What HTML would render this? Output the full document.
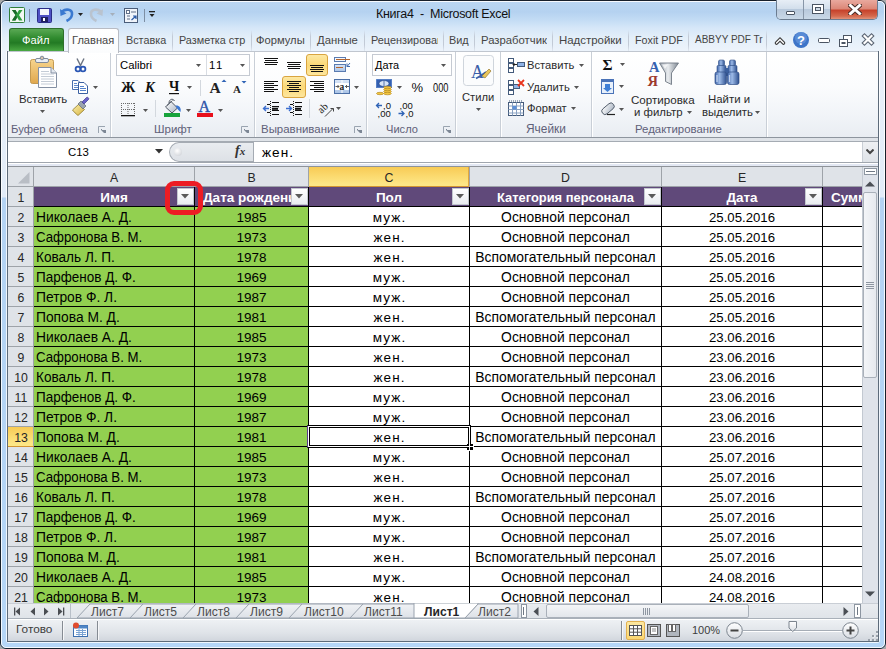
<!DOCTYPE html><html><head><meta charset="utf-8"><style>
html,body{margin:0;padding:0;}
body{width:886px;height:649px;overflow:hidden;position:relative;font-family:"Liberation Sans", sans-serif;background:#a8a8a8;}
div{box-sizing:border-box;}
</style></head><body>
<div style="position:absolute;left:0;top:0;width:886px;height:649px;border-radius:6px;overflow:hidden;background:linear-gradient(#f2f7fc 0px,#bad6f2 2px,#b5d2f0 12px,#c3dcf4 20px,#d6e7f8 28px,#e4eff9 38px,#ecf3fb 50px,#e6eff9 100px,#e2ecf8 197px,#b4d3f3 198px,#b5d6f7 649px);"></div>
<div style="position:absolute;left:0;top:0;width:886px;height:649px;border-radius:6px;border:1px solid #17202b;"></div>
<div style="position:absolute;left:1px;top:1px;width:884px;height:647px;border-radius:5px;border:1px solid rgba(255,255,255,0.85);"></div>
<div style="position:absolute;left:6px;top:51px;width:874px;height:592px;border-radius:0 0 3px 3px;border:1px solid rgba(255,255,255,0.8);border-top:none;"></div>
<div style="position:absolute;left:376px;top:8px;font-size:12.5px;line-height:1;color:#111;white-space:nowrap;z-index:6;letter-spacing:-0.3px;">Книга4 &nbsp;-&nbsp; Microsoft Excel</div>
<div style="position:absolute;left:776px;top:0px;width:102px;height:20px;border:1px solid #6b7c90;border-top:none;border-radius:0 0 5px 5px;overflow:hidden;"><div style="position:absolute;left:0;top:0;width:27px;height:19px;background:linear-gradient(#e7eef6,#d3dfec 45%,#b8c9dc 50%,#c9d8e7);border-right:1px solid #8796a8;"></div><div style="position:absolute;left:27px;top:0;width:27px;height:19px;background:linear-gradient(#e7eef6,#d3dfec 45%,#b8c9dc 50%,#c9d8e7);border-right:1px solid #7a4a44;"></div><div style="position:absolute;left:54px;top:0;width:46px;height:19px;background:linear-gradient(#e9a99e,#dc8878 45%,#c7432c 55%,#d46a4e 85%,#e2937a);"></div></div>
<div style="position:absolute;left:786px;top:11px;width:9px;height:4px;background:#fff;border:1px solid #4b5563;border-radius:1px;"></div>
<div style="position:absolute;left:812px;top:4px;width:12px;height:10px;border:1px solid #4b5563;background:#fff;"><div style="position:absolute;left:2px;top:2px;width:6px;height:4px;border:1px solid #4b5563;background:#cfd9e4"></div></div>
<svg style="position:absolute;left:848px;top:4px" width="14" height="11" viewBox="0 0 14 11"><path d="M2.5 1.5 L11.5 9.5 M11.5 1.5 L2.5 9.5" stroke="#4a2e28" stroke-width="5" stroke-linecap="square"/><path d="M2.5 1.5 L11.5 9.5 M11.5 1.5 L2.5 9.5" stroke="#fff" stroke-width="3" stroke-linecap="square"/></svg>
<div style="position:absolute;left:9px;top:28px;width:55px;height:24px;border:1px solid #2f6f2b;border-bottom:none;border-radius:3px 3px 0 0;background:linear-gradient(#5aa954 0%,#2f8a2e 40%,#237a24 60%,#4fae46 100%);"></div>
<div style="position:absolute;left:22px;top:35px;font-size:11.2px;line-height:1;color:#ffffff;white-space:nowrap;z-index:6;">Файл</div>
<div style="position:absolute;left:68px;top:28px;width:51px;height:25px;border:1px solid #b8bcc4;border-bottom:none;border-radius:3px 3px 0 0;background:linear-gradient(#ffffff,#fbfcfd);z-index:3"></div>
<div style="position:absolute;left:72px;top:35px;font-size:11.1px;line-height:1;color:#454545;white-space:nowrap;z-index:6;z-index:4">Главная</div>
<div style="position:absolute;left:126px;top:35px;font-size:10.8px;line-height:1;color:#454545;white-space:nowrap;z-index:6;">Вставка</div>
<div style="position:absolute;left:179px;top:35px;font-size:10.85px;line-height:1;color:#454545;white-space:nowrap;z-index:6;width:67px;overflow:hidden;">Разметка стр</div>
<div style="position:absolute;left:256px;top:35px;font-size:11.2px;line-height:1;color:#454545;white-space:nowrap;z-index:6;">Формулы</div>
<div style="position:absolute;left:317px;top:35px;font-size:11.3px;line-height:1;color:#454545;white-space:nowrap;z-index:6;">Данные</div>
<div style="position:absolute;left:371px;top:35px;font-size:10.9px;line-height:1;color:#454545;white-space:nowrap;z-index:6;width:67px;overflow:hidden;">Рецензирование</div>
<div style="position:absolute;left:449px;top:35px;font-size:10.9px;line-height:1;color:#454545;white-space:nowrap;z-index:6;">Вид</div>
<div style="position:absolute;left:481px;top:35px;font-size:11.3px;line-height:1;color:#454545;white-space:nowrap;z-index:6;width:66px;overflow:hidden;">Разработчик</div>
<div style="position:absolute;left:559px;top:35px;font-size:11.45px;line-height:1;color:#454545;white-space:nowrap;z-index:6;">Надстройки</div>
<div style="position:absolute;left:635px;top:35px;font-size:10.75px;line-height:1;color:#454545;white-space:nowrap;z-index:6;">Foxit PDF</div>
<div style="position:absolute;left:695px;top:35px;font-size:10.0px;line-height:1;color:#454545;white-space:nowrap;z-index:6;">ABBYY PDF Tr</div>
<div style="position:absolute;left:172px;top:30px;width:1px;height:21px;background:linear-gradient(rgba(180,190,205,0),#c2cad6 30%,#c2cad6 70%,rgba(180,190,205,0.2));"></div>
<div style="position:absolute;left:251px;top:30px;width:1px;height:21px;background:linear-gradient(rgba(180,190,205,0),#c2cad6 30%,#c2cad6 70%,rgba(180,190,205,0.2));"></div>
<div style="position:absolute;left:310px;top:30px;width:1px;height:21px;background:linear-gradient(rgba(180,190,205,0),#c2cad6 30%,#c2cad6 70%,rgba(180,190,205,0.2));"></div>
<div style="position:absolute;left:364px;top:30px;width:1px;height:21px;background:linear-gradient(rgba(180,190,205,0),#c2cad6 30%,#c2cad6 70%,rgba(180,190,205,0.2));"></div>
<div style="position:absolute;left:443px;top:30px;width:1px;height:21px;background:linear-gradient(rgba(180,190,205,0),#c2cad6 30%,#c2cad6 70%,rgba(180,190,205,0.2));"></div>
<div style="position:absolute;left:474px;top:30px;width:1px;height:21px;background:linear-gradient(rgba(180,190,205,0),#c2cad6 30%,#c2cad6 70%,rgba(180,190,205,0.2));"></div>
<div style="position:absolute;left:552px;top:30px;width:1px;height:21px;background:linear-gradient(rgba(180,190,205,0),#c2cad6 30%,#c2cad6 70%,rgba(180,190,205,0.2));"></div>
<div style="position:absolute;left:628px;top:30px;width:1px;height:21px;background:linear-gradient(rgba(180,190,205,0),#c2cad6 30%,#c2cad6 70%,rgba(180,190,205,0.2));"></div>
<div style="position:absolute;left:688px;top:30px;width:1px;height:21px;background:linear-gradient(rgba(180,190,205,0),#c2cad6 30%,#c2cad6 70%,rgba(180,190,205,0.2));"></div>
<div style="position:absolute;left:766px;top:30px;width:1px;height:21px;background:linear-gradient(rgba(180,190,205,0),#c2cad6 30%,#c2cad6 70%,rgba(180,190,205,0.2));"></div>
<div style="position:absolute;left:7px;top:51px;width:872px;height:87px;border:1px solid #c0c6cf;border-bottom:1px solid #8e959e;background:linear-gradient(#ffffff 0%,#fbfcfd 40%,#f1f4f8 75%,#e9edf2 100%);"></div>
<div style="position:absolute;left:110px;top:52px;width:2px;height:85px;border-left:1px solid #c9cfd7;border-right:1px solid #ffffff;"></div>
<div style="position:absolute;left:254px;top:52px;width:2px;height:85px;border-left:1px solid #c9cfd7;border-right:1px solid #ffffff;"></div>
<div style="position:absolute;left:366px;top:52px;width:2px;height:85px;border-left:1px solid #c9cfd7;border-right:1px solid #ffffff;"></div>
<div style="position:absolute;left:455px;top:52px;width:2px;height:85px;border-left:1px solid #c9cfd7;border-right:1px solid #ffffff;"></div>
<div style="position:absolute;left:500px;top:52px;width:2px;height:85px;border-left:1px solid #c9cfd7;border-right:1px solid #ffffff;"></div>
<div style="position:absolute;left:591px;top:52px;width:2px;height:85px;border-left:1px solid #c9cfd7;border-right:1px solid #ffffff;"></div>
<div style="position:absolute;left:766px;top:52px;width:2px;height:85px;border-left:1px solid #c9cfd7;border-right:1px solid #ffffff;"></div>
<div style="position:absolute;left:11px;top:124px;font-size:11.3px;line-height:1;color:#5f6079;white-space:nowrap;z-index:6;">Буфер обмена</div>
<div style="position:absolute;left:154px;top:124px;font-size:11.5px;line-height:1;color:#5f6079;white-space:nowrap;z-index:6;">Шрифт</div>
<div style="position:absolute;left:261px;top:124px;font-size:11.45px;line-height:1;color:#5f6079;white-space:nowrap;z-index:6;">Выравнивание</div>
<div style="position:absolute;left:386px;top:124px;font-size:11.1px;line-height:1;color:#5f6079;white-space:nowrap;z-index:6;">Число</div>
<div style="position:absolute;left:526px;top:124px;font-size:11.9px;line-height:1;color:#5f6079;white-space:nowrap;z-index:6;">Ячейки</div>
<div style="position:absolute;left:635px;top:124px;font-size:11.4px;line-height:1;color:#5f6079;white-space:nowrap;z-index:6;">Редактирование</div>
<svg style="position:absolute;left:98px;top:126px" width="8" height="8" viewBox="0 0 8 8"><path d="M0.5 7 V0.5 H7" stroke="#9aa4b0" fill="none"/><path d="M3 4 L6 7 H8 V4 Z" fill="#7d8795"/><path d="M3 3 L7 7" stroke="#7d8795"/></svg>
<svg style="position:absolute;left:241px;top:126px" width="8" height="8" viewBox="0 0 8 8"><path d="M0.5 7 V0.5 H7" stroke="#9aa4b0" fill="none"/><path d="M3 4 L6 7 H8 V4 Z" fill="#7d8795"/><path d="M3 3 L7 7" stroke="#7d8795"/></svg>
<svg style="position:absolute;left:354px;top:126px" width="8" height="8" viewBox="0 0 8 8"><path d="M0.5 7 V0.5 H7" stroke="#9aa4b0" fill="none"/><path d="M3 4 L6 7 H8 V4 Z" fill="#7d8795"/><path d="M3 3 L7 7" stroke="#7d8795"/></svg>
<svg style="position:absolute;left:443px;top:126px" width="8" height="8" viewBox="0 0 8 8"><path d="M0.5 7 V0.5 H7" stroke="#9aa4b0" fill="none"/><path d="M3 4 L6 7 H8 V4 Z" fill="#7d8795"/><path d="M3 3 L7 7" stroke="#7d8795"/></svg>
<div style="position:absolute;left:7px;top:138px;width:872px;height:4px;background:#dfe3e8;"></div>
<div style="position:absolute;left:7px;top:141px;width:872px;height:1px;background:#a5abb3;"></div>
<div style="position:absolute;left:7px;top:142px;width:872px;height:20px;background:#ffffff;"></div>
<div style="position:absolute;left:7px;top:162px;width:872px;height:1px;background:#a0a6ae;"></div>
<div style="position:absolute;left:7px;top:163px;width:872px;height:1px;background:#ffffff;"></div>
<div style="position:absolute;left:7px;top:164px;width:872px;height:2px;background:#e3e8f3;"></div>
<div style="position:absolute;left:7px;top:166px;width:872px;height:1px;background:#8e9399;"></div>
<div style="position:absolute;left:8px;top:167px;width:854px;height:436px;overflow:hidden;background:#ffffff;">
<div style="position:absolute;left:0px;top:0px;width:854px;height:20px;background:#dfe3e8;"></div>
<div style="position:absolute;left:0px;top:19px;width:854px;height:1px;background:#9ea3a9;"></div>
<div style="position:absolute;left:301px;top:0px;width:160px;height:20px;background:linear-gradient(#f8cb55,#fde583 85%,#fde887);border-right:1px solid #e2a83c;border-bottom:1px solid #d29532;"></div>
<div style="position:absolute;left:0px;top:0px;width:25px;height:19px;background:#dfe3e8;"></div>
<svg style="position:absolute;left:10px;top:5px" width="12" height="12"><path d="M11.5 0 L11.5 11.5 L0 11.5 Z" fill="#b9bec5"/></svg>
<div style="position:absolute;left:25px;top:0px;width:1px;height:20px;background:#9ea3a9;"></div>
<div style="position:absolute;left:186px;top:0px;width:1px;height:20px;background:#9ea3a9;"></div>
<div style="position:absolute;left:300px;top:0px;width:1px;height:20px;background:#9ea3a9;"></div>
<div style="position:absolute;left:461px;top:0px;width:1px;height:20px;background:#9ea3a9;"></div>
<div style="position:absolute;left:653px;top:0px;width:1px;height:20px;background:#9ea3a9;"></div>
<div style="position:absolute;left:814px;top:0px;width:1px;height:20px;background:#9ea3a9;"></div>
<div style="position:absolute;left:26px;width:160px;text-align:center;top:5px;font-size:12.3px;line-height:1;color:#262626;white-space:nowrap;overflow:hidden;">A</div>
<div style="position:absolute;left:187px;width:113px;text-align:center;top:5px;font-size:12.3px;line-height:1;color:#262626;white-space:nowrap;overflow:hidden;">B</div>
<div style="position:absolute;left:301px;width:160px;text-align:center;top:5px;font-size:12.3px;line-height:1;color:#262626;white-space:nowrap;overflow:hidden;">C</div>
<div style="position:absolute;left:462px;width:191px;text-align:center;top:5px;font-size:12.3px;line-height:1;color:#262626;white-space:nowrap;overflow:hidden;">D</div>
<div style="position:absolute;left:654px;width:160px;text-align:center;top:5px;font-size:12.3px;line-height:1;color:#262626;white-space:nowrap;overflow:hidden;">E</div>
<div style="position:absolute;left:0px;top:20px;width:26px;height:416px;background:#dfe3e8;"></div>
<div style="position:absolute;left:25px;top:20px;width:1px;height:416px;background:#9ea3a9;"></div>
<div style="position:absolute;left:0px;top:39px;width:25px;height:1px;background:#9ea3a9;"></div>
<div style="position:absolute;left:0px;width:26px;text-align:center;top:25px;font-size:12.3px;line-height:1;color:#262626;white-space:nowrap;overflow:hidden;">1</div>
<div style="position:absolute;left:26px;top:20px;width:828px;height:19px;background:#60497a;"></div>
<div style="position:absolute;left:26px;top:39px;width:828px;height:1px;background:#000;"></div>
<div style="position:absolute;left:0px;top:59px;width:25px;height:1px;background:#9ea3a9;"></div>
<div style="position:absolute;left:0px;width:26px;text-align:center;top:45px;font-size:12.3px;line-height:1;color:#262626;white-space:nowrap;overflow:hidden;">2</div>
<div style="position:absolute;left:26px;top:40px;width:274px;height:19px;background:#92d050;"></div>
<div style="position:absolute;left:26px;top:59px;width:828px;height:1px;background:#000;"></div>
<div style="position:absolute;left:0px;top:79px;width:25px;height:1px;background:#9ea3a9;"></div>
<div style="position:absolute;left:0px;width:26px;text-align:center;top:65px;font-size:12.3px;line-height:1;color:#262626;white-space:nowrap;overflow:hidden;">3</div>
<div style="position:absolute;left:26px;top:60px;width:274px;height:19px;background:#92d050;"></div>
<div style="position:absolute;left:26px;top:79px;width:828px;height:1px;background:#000;"></div>
<div style="position:absolute;left:0px;top:99px;width:25px;height:1px;background:#9ea3a9;"></div>
<div style="position:absolute;left:0px;width:26px;text-align:center;top:85px;font-size:12.3px;line-height:1;color:#262626;white-space:nowrap;overflow:hidden;">4</div>
<div style="position:absolute;left:26px;top:80px;width:274px;height:19px;background:#92d050;"></div>
<div style="position:absolute;left:26px;top:99px;width:828px;height:1px;background:#000;"></div>
<div style="position:absolute;left:0px;top:119px;width:25px;height:1px;background:#9ea3a9;"></div>
<div style="position:absolute;left:0px;width:26px;text-align:center;top:105px;font-size:12.3px;line-height:1;color:#262626;white-space:nowrap;overflow:hidden;">5</div>
<div style="position:absolute;left:26px;top:100px;width:274px;height:19px;background:#92d050;"></div>
<div style="position:absolute;left:26px;top:119px;width:828px;height:1px;background:#000;"></div>
<div style="position:absolute;left:0px;top:139px;width:25px;height:1px;background:#9ea3a9;"></div>
<div style="position:absolute;left:0px;width:26px;text-align:center;top:125px;font-size:12.3px;line-height:1;color:#262626;white-space:nowrap;overflow:hidden;">6</div>
<div style="position:absolute;left:26px;top:120px;width:274px;height:19px;background:#92d050;"></div>
<div style="position:absolute;left:26px;top:139px;width:828px;height:1px;background:#000;"></div>
<div style="position:absolute;left:0px;top:159px;width:25px;height:1px;background:#9ea3a9;"></div>
<div style="position:absolute;left:0px;width:26px;text-align:center;top:145px;font-size:12.3px;line-height:1;color:#262626;white-space:nowrap;overflow:hidden;">7</div>
<div style="position:absolute;left:26px;top:140px;width:274px;height:19px;background:#92d050;"></div>
<div style="position:absolute;left:26px;top:159px;width:828px;height:1px;background:#000;"></div>
<div style="position:absolute;left:0px;top:179px;width:25px;height:1px;background:#9ea3a9;"></div>
<div style="position:absolute;left:0px;width:26px;text-align:center;top:165px;font-size:12.3px;line-height:1;color:#262626;white-space:nowrap;overflow:hidden;">8</div>
<div style="position:absolute;left:26px;top:160px;width:274px;height:19px;background:#92d050;"></div>
<div style="position:absolute;left:26px;top:179px;width:828px;height:1px;background:#000;"></div>
<div style="position:absolute;left:0px;top:199px;width:25px;height:1px;background:#9ea3a9;"></div>
<div style="position:absolute;left:0px;width:26px;text-align:center;top:185px;font-size:12.3px;line-height:1;color:#262626;white-space:nowrap;overflow:hidden;">9</div>
<div style="position:absolute;left:26px;top:180px;width:274px;height:19px;background:#92d050;"></div>
<div style="position:absolute;left:26px;top:199px;width:828px;height:1px;background:#000;"></div>
<div style="position:absolute;left:0px;top:219px;width:25px;height:1px;background:#9ea3a9;"></div>
<div style="position:absolute;left:0px;width:26px;text-align:center;top:205px;font-size:12.3px;line-height:1;color:#262626;white-space:nowrap;overflow:hidden;">10</div>
<div style="position:absolute;left:26px;top:200px;width:274px;height:19px;background:#92d050;"></div>
<div style="position:absolute;left:26px;top:219px;width:828px;height:1px;background:#000;"></div>
<div style="position:absolute;left:0px;top:239px;width:25px;height:1px;background:#9ea3a9;"></div>
<div style="position:absolute;left:0px;width:26px;text-align:center;top:225px;font-size:12.3px;line-height:1;color:#262626;white-space:nowrap;overflow:hidden;">11</div>
<div style="position:absolute;left:26px;top:220px;width:274px;height:19px;background:#92d050;"></div>
<div style="position:absolute;left:26px;top:239px;width:828px;height:1px;background:#000;"></div>
<div style="position:absolute;left:0px;top:259px;width:25px;height:1px;background:#9ea3a9;"></div>
<div style="position:absolute;left:0px;width:26px;text-align:center;top:245px;font-size:12.3px;line-height:1;color:#262626;white-space:nowrap;overflow:hidden;">12</div>
<div style="position:absolute;left:26px;top:240px;width:274px;height:19px;background:#92d050;"></div>
<div style="position:absolute;left:26px;top:259px;width:828px;height:1px;background:#000;"></div>
<div style="position:absolute;left:0px;top:260px;width:25px;height:19px;background:linear-gradient(#f8cb55,#fde583 85%,#fde887);"></div>
<div style="position:absolute;left:0px;top:279px;width:26px;height:1px;background:#d29532;"></div>
<div style="position:absolute;left:0px;width:26px;text-align:center;top:265px;font-size:12.3px;line-height:1;color:#262626;white-space:nowrap;overflow:hidden;">13</div>
<div style="position:absolute;left:26px;top:260px;width:274px;height:19px;background:#92d050;"></div>
<div style="position:absolute;left:26px;top:279px;width:828px;height:1px;background:#000;"></div>
<div style="position:absolute;left:0px;top:299px;width:25px;height:1px;background:#9ea3a9;"></div>
<div style="position:absolute;left:0px;width:26px;text-align:center;top:285px;font-size:12.3px;line-height:1;color:#262626;white-space:nowrap;overflow:hidden;">14</div>
<div style="position:absolute;left:26px;top:280px;width:274px;height:19px;background:#92d050;"></div>
<div style="position:absolute;left:26px;top:299px;width:828px;height:1px;background:#000;"></div>
<div style="position:absolute;left:0px;top:319px;width:25px;height:1px;background:#9ea3a9;"></div>
<div style="position:absolute;left:0px;width:26px;text-align:center;top:305px;font-size:12.3px;line-height:1;color:#262626;white-space:nowrap;overflow:hidden;">15</div>
<div style="position:absolute;left:26px;top:300px;width:274px;height:19px;background:#92d050;"></div>
<div style="position:absolute;left:26px;top:319px;width:828px;height:1px;background:#000;"></div>
<div style="position:absolute;left:0px;top:339px;width:25px;height:1px;background:#9ea3a9;"></div>
<div style="position:absolute;left:0px;width:26px;text-align:center;top:325px;font-size:12.3px;line-height:1;color:#262626;white-space:nowrap;overflow:hidden;">16</div>
<div style="position:absolute;left:26px;top:320px;width:274px;height:19px;background:#92d050;"></div>
<div style="position:absolute;left:26px;top:339px;width:828px;height:1px;background:#000;"></div>
<div style="position:absolute;left:0px;top:359px;width:25px;height:1px;background:#9ea3a9;"></div>
<div style="position:absolute;left:0px;width:26px;text-align:center;top:345px;font-size:12.3px;line-height:1;color:#262626;white-space:nowrap;overflow:hidden;">17</div>
<div style="position:absolute;left:26px;top:340px;width:274px;height:19px;background:#92d050;"></div>
<div style="position:absolute;left:26px;top:359px;width:828px;height:1px;background:#000;"></div>
<div style="position:absolute;left:0px;top:379px;width:25px;height:1px;background:#9ea3a9;"></div>
<div style="position:absolute;left:0px;width:26px;text-align:center;top:365px;font-size:12.3px;line-height:1;color:#262626;white-space:nowrap;overflow:hidden;">18</div>
<div style="position:absolute;left:26px;top:360px;width:274px;height:19px;background:#92d050;"></div>
<div style="position:absolute;left:26px;top:379px;width:828px;height:1px;background:#000;"></div>
<div style="position:absolute;left:0px;top:399px;width:25px;height:1px;background:#9ea3a9;"></div>
<div style="position:absolute;left:0px;width:26px;text-align:center;top:385px;font-size:12.3px;line-height:1;color:#262626;white-space:nowrap;overflow:hidden;">19</div>
<div style="position:absolute;left:26px;top:380px;width:274px;height:19px;background:#92d050;"></div>
<div style="position:absolute;left:26px;top:399px;width:828px;height:1px;background:#000;"></div>
<div style="position:absolute;left:0px;top:419px;width:25px;height:1px;background:#9ea3a9;"></div>
<div style="position:absolute;left:0px;width:26px;text-align:center;top:405px;font-size:12.3px;line-height:1;color:#262626;white-space:nowrap;overflow:hidden;">20</div>
<div style="position:absolute;left:26px;top:400px;width:274px;height:19px;background:#92d050;"></div>
<div style="position:absolute;left:26px;top:419px;width:828px;height:1px;background:#000;"></div>
<div style="position:absolute;left:0px;top:439px;width:25px;height:1px;background:#9ea3a9;"></div>
<div style="position:absolute;left:0px;width:26px;text-align:center;top:425px;font-size:12.3px;line-height:1;color:#262626;white-space:nowrap;overflow:hidden;">21</div>
<div style="position:absolute;left:26px;top:420px;width:274px;height:19px;background:#92d050;"></div>
<div style="position:absolute;left:26px;top:439px;width:828px;height:1px;background:#000;"></div>
<div style="position:absolute;left:186px;top:20px;width:1px;height:416px;background:#000;"></div>
<div style="position:absolute;left:300px;top:20px;width:1px;height:416px;background:#000;"></div>
<div style="position:absolute;left:461px;top:20px;width:1px;height:416px;background:#000;"></div>
<div style="position:absolute;left:653px;top:20px;width:1px;height:416px;background:#000;"></div>
<div style="position:absolute;left:814px;top:20px;width:1px;height:416px;background:#000;"></div>
<div style="position:absolute;left:26px;width:160px;text-align:center;top:24px;font-size:13.5px;line-height:1;color:#fff;white-space:nowrap;overflow:hidden;font-weight:bold;">Имя</div>
<div style="position:absolute;left:195px;top:24px;font-size:13.5px;line-height:1;color:#fff;white-space:nowrap;font-weight:bold;width:88px;overflow:hidden;">Дата рождения</div>
<div style="position:absolute;left:301px;width:160px;text-align:center;top:24px;font-size:13.5px;line-height:1;color:#fff;white-space:nowrap;overflow:hidden;font-weight:bold;">Пол</div>
<div style="position:absolute;left:462px;width:191px;text-align:center;top:24px;font-size:13.5px;line-height:1;color:#fff;white-space:nowrap;overflow:hidden;font-weight:bold;transform:scaleX(0.955);">Категория персонала</div>
<div style="position:absolute;left:654px;width:160px;text-align:center;top:24px;font-size:13.5px;line-height:1;color:#fff;white-space:nowrap;overflow:hidden;font-weight:bold;">Дата</div>
<div style="position:absolute;left:823px;top:24px;font-size:13.5px;line-height:1;color:#fff;white-space:nowrap;font-weight:bold;">Сумма</div>
<div style="position:absolute;left:169px;top:21px;width:17px;height:17px;background:linear-gradient(#ffffff,#e9ecf0);border:1px solid #c3c8cf;"></div>
<svg style="position:absolute;left:173px;top:27px" width="9" height="5"><path d="M0 0 H8 L4 4.5 Z" fill="#5a5a5a"/></svg>
<div style="position:absolute;left:283px;top:21px;width:17px;height:17px;background:linear-gradient(#ffffff,#e9ecf0);border:1px solid #c3c8cf;"></div>
<svg style="position:absolute;left:287px;top:27px" width="9" height="5"><path d="M0 0 H8 L4 4.5 Z" fill="#5a5a5a"/></svg>
<div style="position:absolute;left:444px;top:21px;width:17px;height:17px;background:linear-gradient(#ffffff,#e9ecf0);border:1px solid #c3c8cf;"></div>
<svg style="position:absolute;left:448px;top:27px" width="9" height="5"><path d="M0 0 H8 L4 4.5 Z" fill="#5a5a5a"/></svg>
<div style="position:absolute;left:636px;top:21px;width:17px;height:17px;background:linear-gradient(#ffffff,#e9ecf0);border:1px solid #c3c8cf;"></div>
<svg style="position:absolute;left:640px;top:27px" width="9" height="5"><path d="M0 0 H8 L4 4.5 Z" fill="#5a5a5a"/></svg>
<div style="position:absolute;left:797px;top:21px;width:17px;height:17px;background:linear-gradient(#ffffff,#e9ecf0);border:1px solid #c3c8cf;"></div>
<svg style="position:absolute;left:801px;top:27px" width="9" height="5"><path d="M0 0 H8 L4 4.5 Z" fill="#5a5a5a"/></svg>
<div style="position:absolute;left:28px;top:44px;font-size:13.8px;line-height:1;color:#000;white-space:nowrap;transform:scaleX(1.0);transform-origin:0 0;">Николаев А. Д.</div>
<div style="position:absolute;left:187px;width:113px;text-align:center;top:44px;font-size:13.5px;line-height:1;color:#000;white-space:nowrap;overflow:hidden;">1985</div>
<div style="position:absolute;left:301px;width:160px;text-align:center;top:44px;font-size:13.5px;line-height:1;color:#000;white-space:nowrap;overflow:hidden;letter-spacing:1.1px;text-indent:1px;">муж.</div>
<div style="position:absolute;left:462px;width:191px;text-align:center;top:44px;font-size:13.9px;line-height:1;color:#000;white-space:nowrap;overflow:hidden;">Основной персонал</div>
<div style="position:absolute;left:654px;width:160px;text-align:center;top:44px;font-size:13.2px;line-height:1;color:#000;white-space:nowrap;overflow:hidden;">25.05.2016</div>
<div style="position:absolute;left:28px;top:64px;font-size:13.8px;line-height:1;color:#000;white-space:nowrap;transform:scaleX(0.96);transform-origin:0 0;">Сафронова В. М.</div>
<div style="position:absolute;left:187px;width:113px;text-align:center;top:64px;font-size:13.5px;line-height:1;color:#000;white-space:nowrap;overflow:hidden;">1973</div>
<div style="position:absolute;left:301px;width:160px;text-align:center;top:64px;font-size:13.5px;line-height:1;color:#000;white-space:nowrap;overflow:hidden;letter-spacing:1.1px;text-indent:1px;">жен.</div>
<div style="position:absolute;left:462px;width:191px;text-align:center;top:64px;font-size:13.9px;line-height:1;color:#000;white-space:nowrap;overflow:hidden;">Основной персонал</div>
<div style="position:absolute;left:654px;width:160px;text-align:center;top:64px;font-size:13.2px;line-height:1;color:#000;white-space:nowrap;overflow:hidden;">25.05.2016</div>
<div style="position:absolute;left:28px;top:84px;font-size:13.8px;line-height:1;color:#000;white-space:nowrap;transform:scaleX(0.985);transform-origin:0 0;">Коваль Л. П.</div>
<div style="position:absolute;left:187px;width:113px;text-align:center;top:84px;font-size:13.5px;line-height:1;color:#000;white-space:nowrap;overflow:hidden;">1978</div>
<div style="position:absolute;left:301px;width:160px;text-align:center;top:84px;font-size:13.5px;line-height:1;color:#000;white-space:nowrap;overflow:hidden;letter-spacing:1.1px;text-indent:1px;">жен.</div>
<div style="position:absolute;left:462px;width:191px;text-align:center;top:84px;font-size:13.9px;line-height:1;color:#000;white-space:nowrap;overflow:hidden;">Вспомогательный персонал</div>
<div style="position:absolute;left:654px;width:160px;text-align:center;top:84px;font-size:13.2px;line-height:1;color:#000;white-space:nowrap;overflow:hidden;">25.05.2016</div>
<div style="position:absolute;left:28px;top:104px;font-size:13.8px;line-height:1;color:#000;white-space:nowrap;transform:scaleX(0.978);transform-origin:0 0;">Парфенов Д. Ф.</div>
<div style="position:absolute;left:187px;width:113px;text-align:center;top:104px;font-size:13.5px;line-height:1;color:#000;white-space:nowrap;overflow:hidden;">1969</div>
<div style="position:absolute;left:301px;width:160px;text-align:center;top:104px;font-size:13.5px;line-height:1;color:#000;white-space:nowrap;overflow:hidden;letter-spacing:1.1px;text-indent:1px;">муж.</div>
<div style="position:absolute;left:462px;width:191px;text-align:center;top:104px;font-size:13.9px;line-height:1;color:#000;white-space:nowrap;overflow:hidden;">Основной персонал</div>
<div style="position:absolute;left:654px;width:160px;text-align:center;top:104px;font-size:13.2px;line-height:1;color:#000;white-space:nowrap;overflow:hidden;">25.05.2016</div>
<div style="position:absolute;left:28px;top:124px;font-size:13.8px;line-height:1;color:#000;white-space:nowrap;transform:scaleX(1.0);transform-origin:0 0;">Петров Ф. Л.</div>
<div style="position:absolute;left:187px;width:113px;text-align:center;top:124px;font-size:13.5px;line-height:1;color:#000;white-space:nowrap;overflow:hidden;">1987</div>
<div style="position:absolute;left:301px;width:160px;text-align:center;top:124px;font-size:13.5px;line-height:1;color:#000;white-space:nowrap;overflow:hidden;letter-spacing:1.1px;text-indent:1px;">муж.</div>
<div style="position:absolute;left:462px;width:191px;text-align:center;top:124px;font-size:13.9px;line-height:1;color:#000;white-space:nowrap;overflow:hidden;">Основной персонал</div>
<div style="position:absolute;left:654px;width:160px;text-align:center;top:124px;font-size:13.2px;line-height:1;color:#000;white-space:nowrap;overflow:hidden;">25.05.2016</div>
<div style="position:absolute;left:28px;top:144px;font-size:13.8px;line-height:1;color:#000;white-space:nowrap;transform:scaleX(1.0);transform-origin:0 0;">Попова М. Д.</div>
<div style="position:absolute;left:187px;width:113px;text-align:center;top:144px;font-size:13.5px;line-height:1;color:#000;white-space:nowrap;overflow:hidden;">1981</div>
<div style="position:absolute;left:301px;width:160px;text-align:center;top:144px;font-size:13.5px;line-height:1;color:#000;white-space:nowrap;overflow:hidden;letter-spacing:1.1px;text-indent:1px;">жен.</div>
<div style="position:absolute;left:462px;width:191px;text-align:center;top:144px;font-size:13.9px;line-height:1;color:#000;white-space:nowrap;overflow:hidden;">Вспомогательный персонал</div>
<div style="position:absolute;left:654px;width:160px;text-align:center;top:144px;font-size:13.2px;line-height:1;color:#000;white-space:nowrap;overflow:hidden;">25.05.2016</div>
<div style="position:absolute;left:28px;top:164px;font-size:13.8px;line-height:1;color:#000;white-space:nowrap;transform:scaleX(1.0);transform-origin:0 0;">Николаев А. Д.</div>
<div style="position:absolute;left:187px;width:113px;text-align:center;top:164px;font-size:13.5px;line-height:1;color:#000;white-space:nowrap;overflow:hidden;">1985</div>
<div style="position:absolute;left:301px;width:160px;text-align:center;top:164px;font-size:13.5px;line-height:1;color:#000;white-space:nowrap;overflow:hidden;letter-spacing:1.1px;text-indent:1px;">муж.</div>
<div style="position:absolute;left:462px;width:191px;text-align:center;top:164px;font-size:13.9px;line-height:1;color:#000;white-space:nowrap;overflow:hidden;">Основной персонал</div>
<div style="position:absolute;left:654px;width:160px;text-align:center;top:164px;font-size:13.2px;line-height:1;color:#000;white-space:nowrap;overflow:hidden;">23.06.2016</div>
<div style="position:absolute;left:28px;top:184px;font-size:13.8px;line-height:1;color:#000;white-space:nowrap;transform:scaleX(0.96);transform-origin:0 0;">Сафронова В. М.</div>
<div style="position:absolute;left:187px;width:113px;text-align:center;top:184px;font-size:13.5px;line-height:1;color:#000;white-space:nowrap;overflow:hidden;">1973</div>
<div style="position:absolute;left:301px;width:160px;text-align:center;top:184px;font-size:13.5px;line-height:1;color:#000;white-space:nowrap;overflow:hidden;letter-spacing:1.1px;text-indent:1px;">жен.</div>
<div style="position:absolute;left:462px;width:191px;text-align:center;top:184px;font-size:13.9px;line-height:1;color:#000;white-space:nowrap;overflow:hidden;">Основной персонал</div>
<div style="position:absolute;left:654px;width:160px;text-align:center;top:184px;font-size:13.2px;line-height:1;color:#000;white-space:nowrap;overflow:hidden;">23.06.2016</div>
<div style="position:absolute;left:28px;top:204px;font-size:13.8px;line-height:1;color:#000;white-space:nowrap;transform:scaleX(0.985);transform-origin:0 0;">Коваль Л. П.</div>
<div style="position:absolute;left:187px;width:113px;text-align:center;top:204px;font-size:13.5px;line-height:1;color:#000;white-space:nowrap;overflow:hidden;">1978</div>
<div style="position:absolute;left:301px;width:160px;text-align:center;top:204px;font-size:13.5px;line-height:1;color:#000;white-space:nowrap;overflow:hidden;letter-spacing:1.1px;text-indent:1px;">жен.</div>
<div style="position:absolute;left:462px;width:191px;text-align:center;top:204px;font-size:13.9px;line-height:1;color:#000;white-space:nowrap;overflow:hidden;">Вспомогательный персонал</div>
<div style="position:absolute;left:654px;width:160px;text-align:center;top:204px;font-size:13.2px;line-height:1;color:#000;white-space:nowrap;overflow:hidden;">23.06.2016</div>
<div style="position:absolute;left:28px;top:224px;font-size:13.8px;line-height:1;color:#000;white-space:nowrap;transform:scaleX(0.978);transform-origin:0 0;">Парфенов Д. Ф.</div>
<div style="position:absolute;left:187px;width:113px;text-align:center;top:224px;font-size:13.5px;line-height:1;color:#000;white-space:nowrap;overflow:hidden;">1969</div>
<div style="position:absolute;left:301px;width:160px;text-align:center;top:224px;font-size:13.5px;line-height:1;color:#000;white-space:nowrap;overflow:hidden;letter-spacing:1.1px;text-indent:1px;">муж.</div>
<div style="position:absolute;left:462px;width:191px;text-align:center;top:224px;font-size:13.9px;line-height:1;color:#000;white-space:nowrap;overflow:hidden;">Основной персонал</div>
<div style="position:absolute;left:654px;width:160px;text-align:center;top:224px;font-size:13.2px;line-height:1;color:#000;white-space:nowrap;overflow:hidden;">23.06.2016</div>
<div style="position:absolute;left:28px;top:244px;font-size:13.8px;line-height:1;color:#000;white-space:nowrap;transform:scaleX(1.0);transform-origin:0 0;">Петров Ф. Л.</div>
<div style="position:absolute;left:187px;width:113px;text-align:center;top:244px;font-size:13.5px;line-height:1;color:#000;white-space:nowrap;overflow:hidden;">1987</div>
<div style="position:absolute;left:301px;width:160px;text-align:center;top:244px;font-size:13.5px;line-height:1;color:#000;white-space:nowrap;overflow:hidden;letter-spacing:1.1px;text-indent:1px;">муж.</div>
<div style="position:absolute;left:462px;width:191px;text-align:center;top:244px;font-size:13.9px;line-height:1;color:#000;white-space:nowrap;overflow:hidden;">Основной персонал</div>
<div style="position:absolute;left:654px;width:160px;text-align:center;top:244px;font-size:13.2px;line-height:1;color:#000;white-space:nowrap;overflow:hidden;">23.06.2016</div>
<div style="position:absolute;left:28px;top:264px;font-size:13.8px;line-height:1;color:#000;white-space:nowrap;transform:scaleX(1.0);transform-origin:0 0;">Попова М. Д.</div>
<div style="position:absolute;left:187px;width:113px;text-align:center;top:264px;font-size:13.5px;line-height:1;color:#000;white-space:nowrap;overflow:hidden;">1981</div>
<div style="position:absolute;left:301px;width:160px;text-align:center;top:264px;font-size:13.5px;line-height:1;color:#000;white-space:nowrap;overflow:hidden;letter-spacing:1.1px;text-indent:1px;">жен.</div>
<div style="position:absolute;left:462px;width:191px;text-align:center;top:264px;font-size:13.9px;line-height:1;color:#000;white-space:nowrap;overflow:hidden;">Вспомогательный персонал</div>
<div style="position:absolute;left:654px;width:160px;text-align:center;top:264px;font-size:13.2px;line-height:1;color:#000;white-space:nowrap;overflow:hidden;">23.06.2016</div>
<div style="position:absolute;left:28px;top:284px;font-size:13.8px;line-height:1;color:#000;white-space:nowrap;transform:scaleX(1.0);transform-origin:0 0;">Николаев А. Д.</div>
<div style="position:absolute;left:187px;width:113px;text-align:center;top:284px;font-size:13.5px;line-height:1;color:#000;white-space:nowrap;overflow:hidden;">1985</div>
<div style="position:absolute;left:301px;width:160px;text-align:center;top:284px;font-size:13.5px;line-height:1;color:#000;white-space:nowrap;overflow:hidden;letter-spacing:1.1px;text-indent:1px;">муж.</div>
<div style="position:absolute;left:462px;width:191px;text-align:center;top:284px;font-size:13.9px;line-height:1;color:#000;white-space:nowrap;overflow:hidden;">Основной персонал</div>
<div style="position:absolute;left:654px;width:160px;text-align:center;top:284px;font-size:13.2px;line-height:1;color:#000;white-space:nowrap;overflow:hidden;">25.07.2016</div>
<div style="position:absolute;left:28px;top:304px;font-size:13.8px;line-height:1;color:#000;white-space:nowrap;transform:scaleX(0.96);transform-origin:0 0;">Сафронова В. М.</div>
<div style="position:absolute;left:187px;width:113px;text-align:center;top:304px;font-size:13.5px;line-height:1;color:#000;white-space:nowrap;overflow:hidden;">1973</div>
<div style="position:absolute;left:301px;width:160px;text-align:center;top:304px;font-size:13.5px;line-height:1;color:#000;white-space:nowrap;overflow:hidden;letter-spacing:1.1px;text-indent:1px;">жен.</div>
<div style="position:absolute;left:462px;width:191px;text-align:center;top:304px;font-size:13.9px;line-height:1;color:#000;white-space:nowrap;overflow:hidden;">Основной персонал</div>
<div style="position:absolute;left:654px;width:160px;text-align:center;top:304px;font-size:13.2px;line-height:1;color:#000;white-space:nowrap;overflow:hidden;">25.07.2016</div>
<div style="position:absolute;left:28px;top:324px;font-size:13.8px;line-height:1;color:#000;white-space:nowrap;transform:scaleX(0.985);transform-origin:0 0;">Коваль Л. П.</div>
<div style="position:absolute;left:187px;width:113px;text-align:center;top:324px;font-size:13.5px;line-height:1;color:#000;white-space:nowrap;overflow:hidden;">1978</div>
<div style="position:absolute;left:301px;width:160px;text-align:center;top:324px;font-size:13.5px;line-height:1;color:#000;white-space:nowrap;overflow:hidden;letter-spacing:1.1px;text-indent:1px;">жен.</div>
<div style="position:absolute;left:462px;width:191px;text-align:center;top:324px;font-size:13.9px;line-height:1;color:#000;white-space:nowrap;overflow:hidden;">Вспомогательный персонал</div>
<div style="position:absolute;left:654px;width:160px;text-align:center;top:324px;font-size:13.2px;line-height:1;color:#000;white-space:nowrap;overflow:hidden;">25.07.2016</div>
<div style="position:absolute;left:28px;top:344px;font-size:13.8px;line-height:1;color:#000;white-space:nowrap;transform:scaleX(0.978);transform-origin:0 0;">Парфенов Д. Ф.</div>
<div style="position:absolute;left:187px;width:113px;text-align:center;top:344px;font-size:13.5px;line-height:1;color:#000;white-space:nowrap;overflow:hidden;">1969</div>
<div style="position:absolute;left:301px;width:160px;text-align:center;top:344px;font-size:13.5px;line-height:1;color:#000;white-space:nowrap;overflow:hidden;letter-spacing:1.1px;text-indent:1px;">муж.</div>
<div style="position:absolute;left:462px;width:191px;text-align:center;top:344px;font-size:13.9px;line-height:1;color:#000;white-space:nowrap;overflow:hidden;">Основной персонал</div>
<div style="position:absolute;left:654px;width:160px;text-align:center;top:344px;font-size:13.2px;line-height:1;color:#000;white-space:nowrap;overflow:hidden;">25.07.2016</div>
<div style="position:absolute;left:28px;top:364px;font-size:13.8px;line-height:1;color:#000;white-space:nowrap;transform:scaleX(1.0);transform-origin:0 0;">Петров Ф. Л.</div>
<div style="position:absolute;left:187px;width:113px;text-align:center;top:364px;font-size:13.5px;line-height:1;color:#000;white-space:nowrap;overflow:hidden;">1987</div>
<div style="position:absolute;left:301px;width:160px;text-align:center;top:364px;font-size:13.5px;line-height:1;color:#000;white-space:nowrap;overflow:hidden;letter-spacing:1.1px;text-indent:1px;">муж.</div>
<div style="position:absolute;left:462px;width:191px;text-align:center;top:364px;font-size:13.9px;line-height:1;color:#000;white-space:nowrap;overflow:hidden;">Основной персонал</div>
<div style="position:absolute;left:654px;width:160px;text-align:center;top:364px;font-size:13.2px;line-height:1;color:#000;white-space:nowrap;overflow:hidden;">25.07.2016</div>
<div style="position:absolute;left:28px;top:384px;font-size:13.8px;line-height:1;color:#000;white-space:nowrap;transform:scaleX(1.0);transform-origin:0 0;">Попова М. Д.</div>
<div style="position:absolute;left:187px;width:113px;text-align:center;top:384px;font-size:13.5px;line-height:1;color:#000;white-space:nowrap;overflow:hidden;">1981</div>
<div style="position:absolute;left:301px;width:160px;text-align:center;top:384px;font-size:13.5px;line-height:1;color:#000;white-space:nowrap;overflow:hidden;letter-spacing:1.1px;text-indent:1px;">жен.</div>
<div style="position:absolute;left:462px;width:191px;text-align:center;top:384px;font-size:13.9px;line-height:1;color:#000;white-space:nowrap;overflow:hidden;">Вспомогательный персонал</div>
<div style="position:absolute;left:654px;width:160px;text-align:center;top:384px;font-size:13.2px;line-height:1;color:#000;white-space:nowrap;overflow:hidden;">25.07.2016</div>
<div style="position:absolute;left:28px;top:404px;font-size:13.8px;line-height:1;color:#000;white-space:nowrap;transform:scaleX(1.0);transform-origin:0 0;">Николаев А. Д.</div>
<div style="position:absolute;left:187px;width:113px;text-align:center;top:404px;font-size:13.5px;line-height:1;color:#000;white-space:nowrap;overflow:hidden;">1985</div>
<div style="position:absolute;left:301px;width:160px;text-align:center;top:404px;font-size:13.5px;line-height:1;color:#000;white-space:nowrap;overflow:hidden;letter-spacing:1.1px;text-indent:1px;">муж.</div>
<div style="position:absolute;left:462px;width:191px;text-align:center;top:404px;font-size:13.9px;line-height:1;color:#000;white-space:nowrap;overflow:hidden;">Основной персонал</div>
<div style="position:absolute;left:654px;width:160px;text-align:center;top:404px;font-size:13.2px;line-height:1;color:#000;white-space:nowrap;overflow:hidden;">24.08.2016</div>
<div style="position:absolute;left:28px;top:424px;font-size:13.8px;line-height:1;color:#000;white-space:nowrap;transform:scaleX(0.96);transform-origin:0 0;">Сафронова В. М.</div>
<div style="position:absolute;left:187px;width:113px;text-align:center;top:424px;font-size:13.5px;line-height:1;color:#000;white-space:nowrap;overflow:hidden;">1973</div>
<div style="position:absolute;left:301px;width:160px;text-align:center;top:424px;font-size:13.5px;line-height:1;color:#000;white-space:nowrap;overflow:hidden;letter-spacing:1.1px;text-indent:1px;">жен.</div>
<div style="position:absolute;left:462px;width:191px;text-align:center;top:424px;font-size:13.9px;line-height:1;color:#000;white-space:nowrap;overflow:hidden;">Основной персонал</div>
<div style="position:absolute;left:654px;width:160px;text-align:center;top:424px;font-size:13.2px;line-height:1;color:#000;white-space:nowrap;overflow:hidden;">24.08.2016</div>
<div style="position:absolute;left:299px;top:258px;width:164px;height:23px;border:1px solid #000;border-left-color:#5a3a8a;"></div>
<div style="position:absolute;left:300px;top:259px;width:162px;height:21px;border:1px solid #fff;"></div>
<div style="position:absolute;left:301px;top:260px;width:160px;height:19px;border:1px solid #000;"></div>
<div style="position:absolute;left:459px;top:277px;width:6px;height:6px;background:#000;"></div>
<div style="position:absolute;left:461px;top:276px;width:1px;height:8px;background:#fff;"></div>
<div style="position:absolute;left:458px;top:279px;width:8px;height:1px;background:#fff;"></div>
</div>
<div style="position:absolute;left:7px;top:51px;width:1px;height:591px;background:#5d6b7a;"></div>
<div style="position:absolute;left:68px;top:147px;font-size:11.4px;line-height:1;color:#000;white-space:nowrap;z-index:6;">C13</div>
<svg style="position:absolute;left:155px;top:149px" width="9" height="5"><path d="M0 0 H8 L4 4.5 Z" fill="#333"/></svg>
<div style="position:absolute;left:169px;top:142px;width:85px;height:20px;border:1px solid #a5abb3;border-right:none;border-radius:10px 0 0 10px;background:linear-gradient(#e9ecf0,#dde1e6);"></div>
<div style="position:absolute;left:174px;top:148px;width:8px;height:8px;border-radius:4px;background:radial-gradient(circle at 40% 35%,#ffffff,#c8ccd2);"></div>
<div style="position:absolute;left:253px;top:142px;width:1px;height:20px;background:#a5abb3;"></div>
<div style="position:absolute;left:235px;top:144px;font-size:14px;line-height:1;color:#333;white-space:nowrap;z-index:6;font-family:Liberation Serif,serif;font-style:italic;font-weight:bold;">f<span style="font-size:11px">x</span></div>
<div style="position:absolute;left:262px;top:146px;font-size:13.6px;line-height:1;color:#000;white-space:nowrap;z-index:6;letter-spacing:1.0px;">жен.</div>
<div style="position:absolute;left:862px;top:142px;width:16px;height:20px;border-left:1px solid #c9ced5;background:linear-gradient(#eef0f3,#dfe3e8);"></div>
<svg style="position:absolute;left:866px;top:149px" width="8" height="6"><path d="M0.5 0.5 L4 4 L7.5 0.5" stroke="#444" stroke-width="2" fill="none"/></svg>
<div style="position:absolute;left:862px;top:167px;width:16px;height:436px;background:#dfe3ea;border-left:1px solid #c3c9d1;"></div>
<div style="position:absolute;left:864px;top:168px;width:13px;height:7px;background:#fff;border:1px solid #8d96a1;"></div>
<div style="position:absolute;left:866px;top:171px;width:9px;height:1px;background:#6f7884;"></div>
<svg style="position:absolute;left:865px;top:181px" width="10" height="6"><path d="M0 5.5 L5 0.5 L10 5.5 Z" fill="#4b4f55"/></svg>
<div style="position:absolute;left:863px;top:192px;width:14px;height:186px;background:linear-gradient(90deg,#f3f5f8,#e6e9ee);border:1px solid #a9b0b9;border-radius:2px;"></div>
<div style="position:absolute;left:866px;top:282px;width:8px;height:1px;background:#8e96a1;"></div>
<div style="position:absolute;left:866px;top:284px;width:8px;height:1px;background:#8e96a1;"></div>
<div style="position:absolute;left:866px;top:286px;width:8px;height:1px;background:#8e96a1;"></div>
<div style="position:absolute;left:866px;top:288px;width:8px;height:1px;background:#8e96a1;"></div>
<svg style="position:absolute;left:865px;top:591px" width="10" height="6"><path d="M0 0.5 L5 5.5 L10 0.5 Z" fill="#4b4f55"/></svg>
<div style="position:absolute;left:878px;top:51px;width:1px;height:591px;background:#5d6b7a;"></div>
<div style="position:absolute;left:8px;top:603px;width:870px;height:16px;background:linear-gradient(#e9ecf0,#dfe3e8);border-top:1px solid #c9ced5;"></div>
<div style="position:absolute;left:8px;top:618px;width:870px;height:1px;background:#a9b0b9;"></div>
<svg style="position:absolute;left:13px;top:607px" width="55" height="9" viewBox="0 0 55 9"><rect x="1" y="0.5" width="1.3" height="8" fill="#4a4d52"/><path d="M7 0.5 V8.5 L2.5 4.5 Z" fill="#4a4d52"/><path d="M22 0.5 V8.5 L17.5 4.5 Z" fill="#4a4d52"/><path d="M31 0.5 V8.5 L35.5 4.5 Z" fill="#4a4d52"/><path d="M45 0.5 V8.5 L49.5 4.5 Z" fill="#4a4d52"/><rect x="50" y="0.5" width="1.3" height="8" fill="#4a4d52"/></svg>
<div style="position:absolute;left:70px;top:604px;width:1px;height:14px;background:#b8bfc8;"></div>
<svg style="position:absolute;left:0;top:603px" width="886" height="16" viewBox="0 0 886 16"><defs><linearGradient id="tg" x1="0" y1="0" x2="0" y2="1"><stop offset="0" stop-color="#f0f2f5"/><stop offset="1" stop-color="#dde1e7"/></linearGradient></defs><path d="M77 15 L90 1 H143 L143 15 Z" fill="url(#tg)" stroke="#9aa3ae" stroke-width="1"/><path d="M130 15 L143 1 H196 L196 15 Z" fill="url(#tg)" stroke="#9aa3ae" stroke-width="1"/><path d="M183 15 L196 1 H249 L249 15 Z" fill="url(#tg)" stroke="#9aa3ae" stroke-width="1"/><path d="M236 15 L249 1 H302 L302 15 Z" fill="url(#tg)" stroke="#9aa3ae" stroke-width="1"/><path d="M289 15 L302 1 H363 L363 15 Z" fill="url(#tg)" stroke="#9aa3ae" stroke-width="1"/><path d="M350 15 L363 1 H427 L427 15 Z" fill="url(#tg)" stroke="#9aa3ae" stroke-width="1"/><path d="M465 15 L478 1 H518 L518 15 Z" fill="url(#tg)" stroke="#9aa3ae" stroke-width="1"/><path d="M414 0 V15 H465 L478 1 V0 Z" fill="#ffffff" stroke="#9aa3ae" stroke-width="1"/></svg>
<div style="position:absolute;left:91px;top:606px;font-size:12.1px;line-height:1;color:#4c4c4c;white-space:nowrap;z-index:6;">Лист7</div>
<div style="position:absolute;left:144px;top:606px;font-size:12.1px;line-height:1;color:#4c4c4c;white-space:nowrap;z-index:6;">Лист5</div>
<div style="position:absolute;left:197px;top:606px;font-size:12.1px;line-height:1;color:#4c4c4c;white-space:nowrap;z-index:6;">Лист8</div>
<div style="position:absolute;left:250px;top:606px;font-size:12.1px;line-height:1;color:#4c4c4c;white-space:nowrap;z-index:6;">Лист9</div>
<div style="position:absolute;left:304px;top:606px;font-size:12.1px;line-height:1;color:#4c4c4c;white-space:nowrap;z-index:6;">Лист10</div>
<div style="position:absolute;left:364px;top:606px;font-size:12.1px;line-height:1;color:#4c4c4c;white-space:nowrap;z-index:6;">Лист11</div>
<div style="position:absolute;left:424px;top:606px;font-size:12.1px;line-height:1;color:#262626;white-space:nowrap;z-index:6;font-weight:bold;">Лист1</div>
<div style="position:absolute;left:478px;top:606px;font-size:12.1px;line-height:1;color:#4c4c4c;white-space:nowrap;z-index:6;">Лист2</div>
<div style="position:absolute;left:521px;top:604px;width:6px;height:14px;background:#fff;border:1px solid #8d96a1;"></div>
<div style="position:absolute;left:523px;top:607px;width:1px;height:8px;background:#6f7884;"></div>
<svg style="position:absolute;left:533px;top:607px" width="6" height="10"><path d="M5.5 0 V9 L0.5 4.5 Z" fill="#4b4f55"/></svg>
<div style="position:absolute;left:546px;top:604px;width:203px;height:14px;background:linear-gradient(#f5f6f8,#e3e6eb);border:1px solid #a9b0b9;border-radius:2px;"></div>
<div style="position:absolute;left:643px;top:608px;width:1px;height:7px;background:#8e96a1;"></div>
<div style="position:absolute;left:645px;top:608px;width:1px;height:7px;background:#8e96a1;"></div>
<div style="position:absolute;left:647px;top:608px;width:1px;height:7px;background:#8e96a1;"></div>
<div style="position:absolute;left:649px;top:608px;width:1px;height:7px;background:#8e96a1;"></div>
<svg style="position:absolute;left:843px;top:607px" width="6" height="10"><path d="M0.5 0 V9 L5.5 4.5 Z" fill="#4b4f55"/></svg>
<div style="position:absolute;left:854px;top:604px;width:7px;height:14px;background:#fff;border:1px solid #8d96a1;"></div>
<div style="position:absolute;left:857px;top:607px;width:1px;height:8px;background:#6f7884;"></div>
<div style="position:absolute;left:8px;top:619px;width:870px;height:23px;background:linear-gradient(#eef1f4,#dfe3e8 60%,#cfd4db);border-top:1px solid #ffffff;"></div>
<div style="position:absolute;left:16px;top:624px;font-size:11.8px;line-height:1;color:#3c3c3c;white-space:nowrap;z-index:6;">Готово</div>
<div style="position:absolute;left:62px;top:621px;width:2px;height:19px;border-left:1px solid #858b93;border-right:1px solid #f6f7f9;"></div>
<div style="position:absolute;left:97px;top:621px;width:2px;height:19px;border-left:1px solid #858b93;border-right:1px solid #f6f7f9;"></div>
<div style="position:absolute;left:621px;top:621px;width:2px;height:19px;border-left:1px solid #858b93;border-right:1px solid #f6f7f9;"></div>
<svg style="position:absolute;left:72px;top:622px" width="16" height="15" viewBox="0 0 16 15"><rect x="1.5" y="3.5" width="14" height="11" fill="#fff" stroke="#3c6fb0"/><rect x="1.5" y="3.5" width="14" height="3" fill="#4f86c6"/><path d="M4 8.5 H14 M4 10.5 H14 M4 12.5 H14 M7 7 V14 M10.5 7 V14" stroke="#7aa3d3"/><circle cx="4" cy="3.5" r="3" fill="#e04b2d"/></svg>
<div style="position:absolute;left:626px;top:621px;width:19px;height:19px;background:linear-gradient(#fde8a0,#fbd772);border:1px solid #e2b150;border-radius:2px;"></div>
<svg style="position:absolute;left:629px;top:625px" width="13" height="11" viewBox="0 0 13 11"><rect x="0.5" y="0.5" width="12" height="10" fill="#fff" stroke="#555"/><path d="M0.5 3.8 H12.5 M0.5 7.2 H12.5 M4.5 0.5 V10.5 M8.5 0.5 V10.5" stroke="#555"/></svg>
<svg style="position:absolute;left:647px;top:624px" width="14" height="13" viewBox="0 0 14 13"><rect x="0.5" y="0.5" width="13" height="12" fill="#b0b6be" stroke="#555"/><rect x="3.5" y="2.5" width="7" height="8" fill="#fff" stroke="#666"/><path d="M5 5 H9 M5 7 H9" stroke="#888"/></svg>
<svg style="position:absolute;left:666px;top:624px" width="14" height="13" viewBox="0 0 14 13"><rect x="0.5" y="0.5" width="13" height="12" fill="#b0b6be" stroke="#555"/><rect x="2.5" y="0.5" width="3" height="7" fill="#fff" stroke="#666"/><rect x="6.5" y="0.5" width="3" height="7" fill="#fff" stroke="#666"/></svg>
<div style="position:absolute;left:692px;top:625px;font-size:11.0px;line-height:1;color:#3c3c3c;white-space:nowrap;z-index:6;">100%</div>
<svg style="position:absolute;left:726px;top:621px" width="140" height="19" viewBox="0 0 140 19"><line x1="17" y1="9.5" x2="117" y2="9.5" stroke="#a6adb6"/><line x1="17" y1="10.5" x2="117" y2="10.5" stroke="#ffffff"/><circle cx="8.5" cy="9.5" r="7.8" fill="url(#zg)" stroke="#7c858f"/><rect x="4.5" y="8.5" width="8" height="2" fill="#444"/><circle cx="124.5" cy="9.5" r="7.8" fill="url(#zg)" stroke="#7c858f"/><rect x="120.5" y="8.5" width="8" height="2" fill="#444"/><rect x="123.5" y="5.5" width="2" height="8" fill="#444"/><path d="M63 0.5 H70.5 V7 L66.75 10.5 L63 7 Z" fill="url(#zg)" stroke="#7c858f"/><defs><linearGradient id="zg" x1="0" y1="0" x2="0" y2="1"><stop offset="0" stop-color="#ffffff"/><stop offset="1" stop-color="#d9dde3"/></linearGradient></defs></svg>
<svg style="position:absolute;left:866px;top:629px" width="12" height="12" viewBox="0 0 12 12"><g fill="#ffffff"><rect x="10.5" y="2.5" width="2" height="2"/><rect x="6.5" y="6.5" width="2" height="2"/><rect x="10.5" y="6.5" width="2" height="2"/><rect x="2.5" y="10.5" width="2" height="2"/><rect x="6.5" y="10.5" width="2" height="2"/><rect x="10.5" y="10.5" width="2" height="2"/></g><g fill="#9aa1aa"><rect x="10" y="2" width="2" height="2"/><rect x="6" y="6" width="2" height="2"/><rect x="10" y="6" width="2" height="2"/><rect x="2" y="10" width="2" height="2"/><rect x="6" y="10" width="2" height="2"/><rect x="10" y="10" width="2" height="2"/></g></svg>
<div style="position:absolute;left:7px;top:641px;width:872px;height:1px;background:#5d6b7a;"></div>
<div style="position:absolute;left:19px;top:94px;font-size:11.4px;line-height:1;color:#2b2b2b;white-space:nowrap;z-index:6;">Вставить</div>
<div style="position:absolute;left:120px;top:60px;font-size:11.3px;line-height:1;color:#000;white-space:nowrap;z-index:6;">Calibri</div>
<div style="position:absolute;left:209px;top:60px;font-size:11.3px;line-height:1;color:#000;white-space:nowrap;z-index:6;letter-spacing:1.5px;">11</div>
<div style="position:absolute;left:375px;top:60px;font-size:10.9px;line-height:1;color:#000;white-space:nowrap;z-index:6;">Дата</div>
<div style="position:absolute;left:462px;top:92px;font-size:11.2px;line-height:1;color:#2b2b2b;white-space:nowrap;z-index:6;">Стили</div>
<div style="position:absolute;left:527px;top:60px;font-size:11.2px;line-height:1;color:#2b2b2b;white-space:nowrap;z-index:6;">Вставить</div>
<div style="position:absolute;left:527px;top:82px;font-size:11.2px;line-height:1;color:#2b2b2b;white-space:nowrap;z-index:6;">Удалить</div>
<div style="position:absolute;left:527px;top:103px;font-size:11.2px;line-height:1;color:#2b2b2b;white-space:nowrap;z-index:6;">Формат</div>
<div style="position:absolute;left:631px;top:94px;font-size:11.6px;line-height:1;color:#2b2b2b;white-space:nowrap;z-index:6;">Сортировка</div>
<div style="position:absolute;left:634px;top:107px;font-size:11.4px;line-height:1;color:#2b2b2b;white-space:nowrap;z-index:6;">и фильтр</div>
<div style="position:absolute;left:708px;top:94px;font-size:11.4px;line-height:1;color:#2b2b2b;white-space:nowrap;z-index:6;">Найти и</div>
<div style="position:absolute;left:702px;top:107px;font-size:11.4px;line-height:1;color:#2b2b2b;white-space:nowrap;z-index:6;">выделить</div>
<svg style="position:absolute;left:0;top:0;z-index:5" width="886" height="649" viewBox="0 0 886 649"><defs><linearGradient id="gBtn" x1="0" y1="0" x2="0" y2="1"><stop offset="0" stop-color="#fde9a5"/><stop offset="0.5" stop-color="#fcd978"/><stop offset="1" stop-color="#fde7a0"/></linearGradient><linearGradient id="gBlue" x1="0" y1="0" x2="0" y2="1"><stop offset="0" stop-color="#8fb4e8"/><stop offset="1" stop-color="#2f5fb3"/></linearGradient><linearGradient id="gGray" x1="0" y1="0" x2="0" y2="1"><stop offset="0" stop-color="#c6ccd6"/><stop offset="1" stop-color="#8c96a3"/></linearGradient><linearGradient id="gClip" x1="0" y1="0" x2="0" y2="1"><stop offset="0" stop-color="#f6d48c"/><stop offset="1" stop-color="#e0a84e"/></linearGradient><linearGradient id="gFun" x1="0" y1="0" x2="1" y2="0"><stop offset="0" stop-color="#9aa2ac"/><stop offset="0.45" stop-color="#e9ecef"/><stop offset="1" stop-color="#7f8892"/></linearGradient><linearGradient id="gBin" x1="0" y1="0" x2="1" y2="0"><stop offset="0" stop-color="#3f64a8"/><stop offset="0.4" stop-color="#9dbbe8"/><stop offset="1" stop-color="#2d4f8e"/></linearGradient><linearGradient id="gCell" x1="0" y1="0" x2="0" y2="1"><stop offset="0" stop-color="#dbe7f7"/><stop offset="1" stop-color="#a9c3e6"/></linearGradient><linearGradient id="gBrush" x1="0" y1="0" x2="1" y2="1"><stop offset="0" stop-color="#fbf0b0"/><stop offset="1" stop-color="#d8b440"/></linearGradient><linearGradient id="gBkt" x1="0" y1="0" x2="1" y2="1"><stop offset="0" stop-color="#ffffff"/><stop offset="1" stop-color="#aab5c3"/></linearGradient></defs><rect x="9.5" y="7.5" width="15" height="15" rx="1" fill="#f2f8f2" stroke="#2f7f3b"/><path d="M12 10 H15.5 L17.2 13 L19 10 H22.5 L19 15 L22.5 20.5 H19 L17.2 17.3 L15.5 20.5 H12 L15.5 15 Z" fill="#2e9e3e"/><path d="M12 10 H15.5 L17.2 13 L15.5 15 Z M12 20.5 L15.5 15 L17.2 17.3 L15.5 20.5 Z" fill="#1b6a2a"/><rect x="29" y="9" width="1" height="13" fill="#7d8ea3"/><rect x="37.5" y="8.5" width="14" height="14" rx="1" fill="#4e51c4" stroke="#2a2d86"/><rect x="40" y="9" width="9" height="6" fill="#f4f6fb"/><rect x="41" y="17" width="7" height="5" fill="#1e2060"/><rect x="43" y="18" width="2" height="3" fill="#fff"/><path d="M62 11.5 C66 8.5 72.5 9 72 14.5 C71.7 18 68.5 20 66.5 21" stroke="#3a79d0" stroke-width="2.6" fill="none"/><path d="M60 9 L60.5 16 L66.5 13.5 Z" fill="#3a79d0"/><path d="M78 13 H83 L80.5 16.0 Z" fill="#222"/><path d="M101 11.5 C97 8.5 90.5 9 91 14.5 C91.3 18 94.5 20 96.5 21" stroke="#b9c3cf" stroke-width="2.6" fill="none"/><path d="M103 9 L102.5 16 L96.5 13.5 Z" fill="#b9c3cf"/><path d="M110 13 H115 L112.5 16.0 Z" fill="#a5afbb"/><rect x="124.5" y="8.5" width="13" height="14" fill="#f0f4fa" stroke="#4a5d7a"/><rect x="126.5" y="10.5" width="3" height="3" fill="#fff" stroke="#60708a"/><path d="M131 12 H136 M127 16 H130 M127 19 H130" stroke="#60708a"/><path d="M131.5 20 L136 16 M133 16 H136 V19" stroke="#2c5ca8" stroke-width="1.2" fill="none"/><rect x="144" y="9" width="1" height="13" fill="#7d8ea3"/><rect x="149" y="11" width="6" height="1.3" fill="#222"/><path d="M149.5 14 H154.5 L152.0 17.0 Z" fill="#222"/><path d="M776.5 43 L780 39.5 L783.5 43" stroke="#3a3a3a" stroke-width="3.6" fill="none" stroke-linecap="round"/><path d="M776.5 43 L780 39.5 L783.5 43" stroke="#fff" stroke-width="1.4" fill="none" stroke-linecap="round"/><circle cx="801" cy="40" r="8" fill="#3d74c8"/><circle cx="801" cy="38" r="6" fill="#6b9be0" opacity="0.6"/><text x="801" y="45" font-size="13" font-weight="bold" fill="#fff" text-anchor="middle" font-family="Liberation Sans">?</text><rect x="818.5" y="38.5" width="11" height="4" rx="1" fill="#fff" stroke="#4b5563"/><rect x="843.5" y="35.5" width="8" height="7" fill="#fff" stroke="#4b5563"/><rect x="839.5" y="39.5" width="8" height="7" fill="#fff" stroke="#4b5563"/><rect x="841.5" y="42" width="4" height="2" fill="#4b5563"/><path d="M864.5 36 L871.5 43 M871.5 36 L864.5 43" stroke="#5b6573" stroke-width="4.4" stroke-linecap="square"/><path d="M864.5 36 L871.5 43 M871.5 36 L864.5 43" stroke="#fff" stroke-width="2.2" stroke-linecap="square"/><rect x="30.5" y="59.5" width="23" height="24" rx="2" fill="url(#gClip)" stroke="#c39a52"/><rect x="35.5" y="58.5" width="13" height="4" rx="1.5" fill="#e9eef4" stroke="#7f8a99"/><circle cx="42" cy="58" r="1.8" fill="#e9eef4" stroke="#7f8a99"/><circle cx="42" cy="58" r="0.7" fill="#b9742c"/><path d="M38.5 67.5 H51 L56.5 73 V87.5 H38.5 Z" fill="#fff" stroke="#8490a3"/><path d="M51 67.5 V73 H56.5" fill="#e3e8ef" stroke="#8490a3"/><path d="M41 71.5 H49 M41 74 H54 M41 76.5 H54 M41 79 H54 M41 81.5 H54 M41 84 H54" stroke="#b5bfcc" stroke-width="0.8"/><path d="M40 110 H45 L42.5 113.0 Z" fill="#555"/><path d="M77 58.5 L81 66.5 M84 58.5 L80 66.5" stroke="#6a7280" stroke-width="1.4"/><circle cx="78" cy="69" r="2.4" fill="none" stroke="#2a56b4" stroke-width="1.8"/><circle cx="83" cy="69" r="2.4" fill="none" stroke="#2a56b4" stroke-width="1.8"/><path d="M72.5 80.5 H78 L80.5 83 V89.5 H72.5 Z" fill="#fff" stroke="#4a6fae"/><path d="M74 83.5 H77 M74 85.5 H79 M74 87.5 H79" stroke="#4d7cc4" stroke-width="0.9"/><path d="M78.5 82.5 H84 L87.5 86 V93.5 H78.5 Z" fill="#fff" stroke="#3a5fa0"/><path d="M80 86.5 H84 M80 88.5 H86 M80 90.5 H86" stroke="#3f73c4" stroke-width="0.9"/><path d="M93 86 H98 L95.5 89.0 Z" fill="#555"/><path d="M72.5 110 L79 104 L84.5 109.5 L78 115.5 C76 114 74 112 72.5 110 Z" fill="url(#gBrush)" stroke="#8f7a2a" stroke-width="0.8"/><path d="M78 104 L81 101 L86 106 L83 109 Z" fill="#9aa3ae" stroke="#5f6872" stroke-width="0.7"/><path d="M82 102 L86.5 97.5 C87.5 96.5 89.5 98.5 88.5 99.5 L84 104 Z" fill="#6b62c8" stroke="#3c3590" stroke-width="0.7"/><rect x="116.5" y="54.5" width="133" height="21" fill="#fff" stroke="#c5cad2"/><line x1="206.5" y1="55" x2="206.5" y2="75" stroke="#d9dde3"/><path d="M196 64 H201 L198.5 67.0 Z" fill="#555"/><path d="M240 64 H245 L242.5 67.0 Z" fill="#555"/><text x="121" y="91.5" font-size="14.5" font-weight="bold" fill="#111" font-family="Liberation Serif">Ж</text><text x="145" y="91.5" font-size="14.5" font-weight="bold" font-style="italic" fill="#111" font-family="Liberation Serif">К</text><text x="169" y="91" font-size="14" font-weight="bold" fill="#111" font-family="Liberation Serif">Ч</text><rect x="169" y="93" width="10" height="1.2" fill="#111"/><path d="M187 86 H192 L189.5 89.0 Z" fill="#555"/><rect x="200" y="80" width="1" height="16" fill="#d3d8de"/><text x="209.5" y="93" font-size="15.5" font-weight="bold" fill="#222" font-family="Liberation Serif">A</text><path d="M221.5 82 L224 79.5 L226.5 82 Z" fill="#2f63b6"/><text x="233" y="93" font-size="11" font-weight="bold" fill="#222" font-family="Liberation Serif">A</text><path d="M241.5 81 L244 83.5 L246.5 81 Z" fill="#2f63b6"/><path d="M121.5 103 V115 M134.5 103 V115 M128 103 V115 M121 103.5 H135 M121 109.5 H135" stroke="#6a6a6a" stroke-dasharray="1 1"/><rect x="121" y="115" width="14" height="1.3" fill="#111"/><path d="M143 109 H148 L145.5 112.0 Z" fill="#555"/><rect x="155" y="100" width="1" height="17" fill="#d3d8de"/><path d="M165.5 107 L171 101.5 L177.5 108 L172 113 Z" fill="url(#gBkt)" stroke="#3c4552" stroke-width="0.9"/><path d="M167 105.5 L172.5 100.5" stroke="#3c4552" stroke-width="0.8"/><path d="M169 103 C169 99 173 98 174.5 101" stroke="#3c4552" stroke-width="0.9" fill="none"/><path d="M175.5 105.5 C179 105 181.5 107.5 180.5 112 C179 111 177.5 109 176.5 107.5 Z" fill="#3b78d4"/><rect x="164" y="113" width="16" height="4" fill="#17a33b"/><path d="M186 109 H191 L188.5 112.0 Z" fill="#555"/><text x="198.5" y="112" font-size="16" fill="#2d53a8" font-family="Liberation Serif" stroke="#2d53a8" stroke-width="0.4">A</text><rect x="197" y="113" width="16" height="4" fill="#e8101c"/><path d="M218 109 H223 L220.5 112.0 Z" fill="#555"/><rect x="264" y="58" width="14" height="1" fill="#111"/><rect x="265" y="60" width="12" height="1" fill="#111"/><rect x="264" y="62" width="14" height="1" fill="#111"/><rect x="265" y="64" width="12" height="1" fill="#111"/><rect x="287" y="62" width="14" height="1" fill="#111"/><rect x="288" y="64" width="12" height="1" fill="#111"/><rect x="287" y="66" width="14" height="1" fill="#111"/><rect x="288" y="68" width="12" height="1" fill="#111"/><rect x="306.5" y="54.5" width="21" height="21" rx="2.5" fill="url(#gBtn)" stroke="#d9a440"/><rect x="310" y="65" width="14" height="1" fill="#111"/><rect x="311" y="67" width="12" height="1" fill="#111"/><rect x="310" y="69" width="14" height="1" fill="#111"/><rect x="311" y="71" width="12" height="1" fill="#111"/><rect x="334.5" y="57.5" width="11" height="4" fill="#f4f8fd" stroke="#5a7bb0"/><rect x="334.5" y="64.5" width="11" height="7" fill="url(#gCell)" stroke="#5a7bb0"/><path d="M336 59.5 H350 M336 67.5 H343" stroke="#b5652d" stroke-width="1.2"/><path d="M350 63 L347 66.5 M347 63.5 V66.5 H350" stroke="#3e6bb0" stroke-width="1" fill="none"/><rect x="264" y="81" width="14" height="1" fill="#111"/><rect x="264" y="83" width="10" height="1" fill="#111"/><rect x="264" y="85" width="14" height="1" fill="#111"/><rect x="264" y="87" width="10" height="1" fill="#111"/><rect x="264" y="89" width="14" height="1" fill="#111"/><rect x="264" y="91" width="10" height="1" fill="#111"/><rect x="282.5" y="76.5" width="23" height="21" rx="2.5" fill="url(#gBtn)" stroke="#d9a440"/><rect x="287" y="81" width="14" height="1" fill="#111"/><rect x="289" y="83" width="10" height="1" fill="#111"/><rect x="287" y="85" width="14" height="1" fill="#111"/><rect x="289" y="87" width="10" height="1" fill="#111"/><rect x="287" y="89" width="14" height="1" fill="#111"/><rect x="289" y="91" width="10" height="1" fill="#111"/><rect x="310" y="81" width="14" height="1" fill="#111"/><rect x="314" y="83" width="10" height="1" fill="#111"/><rect x="310" y="85" width="14" height="1" fill="#111"/><rect x="314" y="87" width="10" height="1" fill="#111"/><rect x="310" y="89" width="14" height="1" fill="#111"/><rect x="314" y="91" width="10" height="1" fill="#111"/><rect x="334.5" y="79.5" width="15" height="14" fill="url(#gCell)" stroke="#4b6fa6"/><rect x="335" y="83" width="14" height="7" fill="#fff"/><path d="M342 80 V83 M342 90 V93" stroke="#fff"/><text x="339.5" y="89.5" font-size="9.5" font-weight="bold" fill="#222" font-family="Liberation Serif">a</text><path d="M335.5 86.5 H339 M345.5 86.5 H349 M337.5 85 L339 86.5 L337.5 88 M347 85 L345.5 86.5 L347 88" stroke="#333" stroke-width="0.8" fill="none"/><path d="M354 86 H359 L356.5 89.0 Z" fill="#555"/><path d="M270.5 101 V117" stroke="#222" stroke-dasharray="1 1"/><rect x="272" y="102" width="7" height="1" fill="#111"/><rect x="267" y="104" width="3" height="1" fill="#111"/><rect x="272" y="106" width="7" height="1.3" fill="#111"/><rect x="272" y="108" width="6" height="1.8" fill="#111"/><rect x="272" y="110" width="7" height="1" fill="#111"/><rect x="267" y="112" width="3" height="1" fill="#111"/><rect x="272" y="114" width="7" height="1" fill="#111"/><path d="M269 108.5 H263.5 M266 106 L263.5 108.5 L266 111" stroke="#3d6fd0" stroke-width="1.4" fill="none"/><path d="M293.5 101 V117" stroke="#222" stroke-dasharray="1 1"/><rect x="295" y="102" width="7" height="1" fill="#111"/><rect x="290" y="104" width="3" height="1" fill="#111"/><rect x="295" y="106" width="7" height="1.3" fill="#111"/><rect x="295" y="108" width="6" height="1.8" fill="#111"/><rect x="295" y="110" width="7" height="1" fill="#111"/><rect x="290" y="112" width="3" height="1" fill="#111"/><rect x="295" y="114" width="7" height="1" fill="#111"/><path d="M286 108.5 H291.5 M289 106 L291.5 108.5 L289 111" stroke="#3d6fd0" stroke-width="1.4" fill="none"/><rect x="309" y="99" width="1" height="19" fill="#d3d8de"/><text x="317" y="111" font-size="10.5" fill="#111" font-family="Liberation Serif" transform="rotate(-45 323 107)">ab</text><path d="M325 116.5 L333 108.5 M330.5 108.5 H333.5 V111.5" stroke="#444" fill="none"/><path d="M336 107 H341 L338.5 110.0 Z" fill="#555"/><rect x="372.5" y="54.5" width="79" height="21" fill="#fff" stroke="#c5cad2"/><path d="M441 64 H446 L443.5 67.0 Z" fill="#555"/><rect x="376" y="79" width="16" height="9" fill="#3460b0"/><rect x="376.5" y="79.5" width="15" height="8" fill="none" stroke="#6f95d4" stroke-width="0.6"/><ellipse cx="384" cy="83.5" rx="5" ry="3" fill="#d6e4f7" stroke="#24458a" stroke-width="0.6"/><path d="M384 81 V86" stroke="#24458a" stroke-width="0.7"/><ellipse cx="387.5" cy="87.5" rx="3.8" ry="1.3" fill="#f4c640" stroke="#a87d18" stroke-width="0.6"/><ellipse cx="387.5" cy="89.5" rx="3.8" ry="1.3" fill="#f4c640" stroke="#a87d18" stroke-width="0.6"/><ellipse cx="387.5" cy="91.5" rx="3.8" ry="1.3" fill="#f4c640" stroke="#a87d18" stroke-width="0.6"/><ellipse cx="387.5" cy="93.5" rx="3.8" ry="1.3" fill="#f4c640" stroke="#a87d18" stroke-width="0.6"/><ellipse cx="380" cy="93.5" rx="3.5" ry="1.2" fill="#f4c640" stroke="#a87d18" stroke-width="0.6"/><path d="M397 86 H402 L399.5 89.0 Z" fill="#555"/><text x="411.5" y="91.5" font-size="13" fill="#111" font-family="Liberation Sans">%</text><text x="433" y="91.5" font-size="12.5" fill="#111" font-family="Liberation Sans" textLength="15.5" lengthAdjust="spacingAndGlyphs">000</text><text x="383" y="109" font-size="9.5" fill="#111" font-family="Liberation Sans">,0</text><text x="377.5" y="116.5" font-size="9.5" fill="#111" font-family="Liberation Sans">,00</text><path d="M376.5 105.5 H382 M379 103 L376.5 105.5 L379 108" stroke="#2f63b6" stroke-width="1.3" fill="none"/><text x="399.5" y="109" font-size="9.5" fill="#111" font-family="Liberation Sans">,00</text><text x="405.5" y="116.5" font-size="9.5" fill="#111" font-family="Liberation Sans">,0</text><path d="M398.5 113.5 H404 M401.5 111 L404 113.5 L401.5 116" stroke="#2f63b6" stroke-width="1.3" fill="none"/><rect x="463.5" y="55.5" width="30" height="30" rx="3" fill="#fbfcfd" stroke="#cfd5dc"/><text x="471" y="78" font-size="18" fill="#3a5ea8" font-family="Liberation Serif">A</text><path d="M476 78.5 C479 77 482 75 486 72" stroke="#3a5ea8" stroke-width="1.6" fill="none"/><path d="M482 76 L489 69 L491 71 L485 78 Z" fill="#e9c65a" stroke="#8a6a20" stroke-width="0.6"/><path d="M476 108 H481 L478.5 111.0 Z" fill="#555"/><rect x="508.5" y="58.5" width="5" height="4" fill="#fff" stroke="#435a7a"/><rect x="508.5" y="63.5" width="5" height="4" fill="#fff" stroke="#435a7a"/><rect x="508.5" y="68.5" width="5" height="4" fill="#fff" stroke="#435a7a"/><rect x="517.5" y="62.5" width="7" height="4" fill="#8fb3e6" stroke="#435a7a"/><path d="M513 64.5 H517 M514.5 63 L513 64.5 L514.5 66" stroke="#222" fill="none"/><path d="M579 64 H584 L581.5 67.0 Z" fill="#555"/><rect x="508.5" y="80.5" width="5" height="4" fill="#fff" stroke="#435a7a"/><rect x="508.5" y="85.5" width="5" height="4" fill="#fff" stroke="#435a7a"/><rect x="508.5" y="90.5" width="5" height="4" fill="#fff" stroke="#435a7a"/><rect x="513.5" y="84.5" width="6" height="4" fill="#8fb3e6" stroke="#435a7a"/><path d="M518 80 L524 86 M524 80 L518 86" stroke="#e8341c" stroke-width="1.8"/><path d="M574 86 H579 L576.5 89.0 Z" fill="#555"/><rect x="508.5" y="102.5" width="15" height="13" fill="#fff" stroke="#435a7a"/><path d="M508.5 106 H523.5 M508.5 109.5 H523.5 M508.5 113 H523.5 M512.5 102.5 V115.5 M516.5 102.5 V115.5 M520.5 102.5 V115.5" stroke="#8aa2c2"/><rect x="512.5" y="106" width="4" height="3.5" fill="#5c8fd6"/><path d="M509 101 H523" stroke="#435a7a" stroke-dasharray="1 1"/><path d="M571 107 H576 L573.5 110.0 Z" fill="#555"/><text x="602.5" y="69.5" font-size="14" font-weight="bold" fill="#111" font-family="Liberation Serif" textLength="10" lengthAdjust="spacingAndGlyphs">Σ</text><path d="M620 63 H625 L622.5 66.0 Z" fill="#555"/><rect x="601.5" y="79.5" width="12" height="14" fill="#e7f0fb" stroke="#4a73b8"/><rect x="602" y="80" width="11" height="2" fill="#4a73b8"/><path d="M605 84 H610 V88 H612 L607.5 92 L603 88 H605 Z" fill="#3f7fd6"/><path d="M619 85 H624 L621.5 88.0 Z" fill="#555"/><rect x="601" y="105.5" width="14" height="6.5" rx="3" transform="rotate(-40 608 108.75)" fill="url(#gBkt)" stroke="#4f5a68" stroke-width="0.9"/><path d="M607 114.5 H615" stroke="#222" stroke-width="1.2"/><path d="M619 108 H624 L621.5 111.0 Z" fill="#555"/><path d="M659.5 63 H678.5 L671.5 73 V84.5 L665.5 81.5 V73 Z" fill="url(#gFun)" stroke="#727b86" stroke-width="0.9"/><path d="M662 64.5 H668 L665 69 Z" fill="#ffffff" opacity="0.7"/><text x="649" y="71.5" font-size="14.5" font-weight="bold" fill="#3561b0" font-family="Liberation Serif">A</text><text x="647.5" y="85.5" font-size="14.5" font-weight="bold" fill="#9c3a2e" font-family="Liberation Serif">Я</text><path d="M687 111 H692 L689.5 114.0 Z" fill="#555"/><rect x="718.5" y="60" width="6" height="6" rx="1.5" fill="url(#gBin)" stroke="#2f4f86" stroke-width="0.6"/><rect x="729.5" y="60" width="6" height="6" rx="1.5" fill="url(#gBin)" stroke="#2f4f86" stroke-width="0.6"/><rect x="717" y="65.5" width="9" height="7" rx="1" fill="url(#gBin)" stroke="#2f4f86" stroke-width="0.6"/><rect x="728" y="65.5" width="9" height="7" rx="1" fill="url(#gBin)" stroke="#2f4f86" stroke-width="0.6"/><rect x="725" y="68" width="4" height="8" fill="#3b5f9e"/><rect x="715" y="72" width="11.5" height="12.5" rx="2" fill="url(#gBin)" stroke="#2f4f86" stroke-width="0.7"/><rect x="727.5" y="72" width="11.5" height="12.5" rx="2" fill="url(#gBin)" stroke="#2f4f86" stroke-width="0.7"/><path d="M717 75 V82 M729.5 75 V82" stroke="#d8e6fa" stroke-width="1.3" opacity="0.8"/><path d="M755 111 H760 L757.5 114.0 Z" fill="#555"/><rect x="167.5" y="183.5" width="33" height="29" rx="6.5" fill="none" stroke="#ed1c24" stroke-width="5"/></svg>
</body></html>
